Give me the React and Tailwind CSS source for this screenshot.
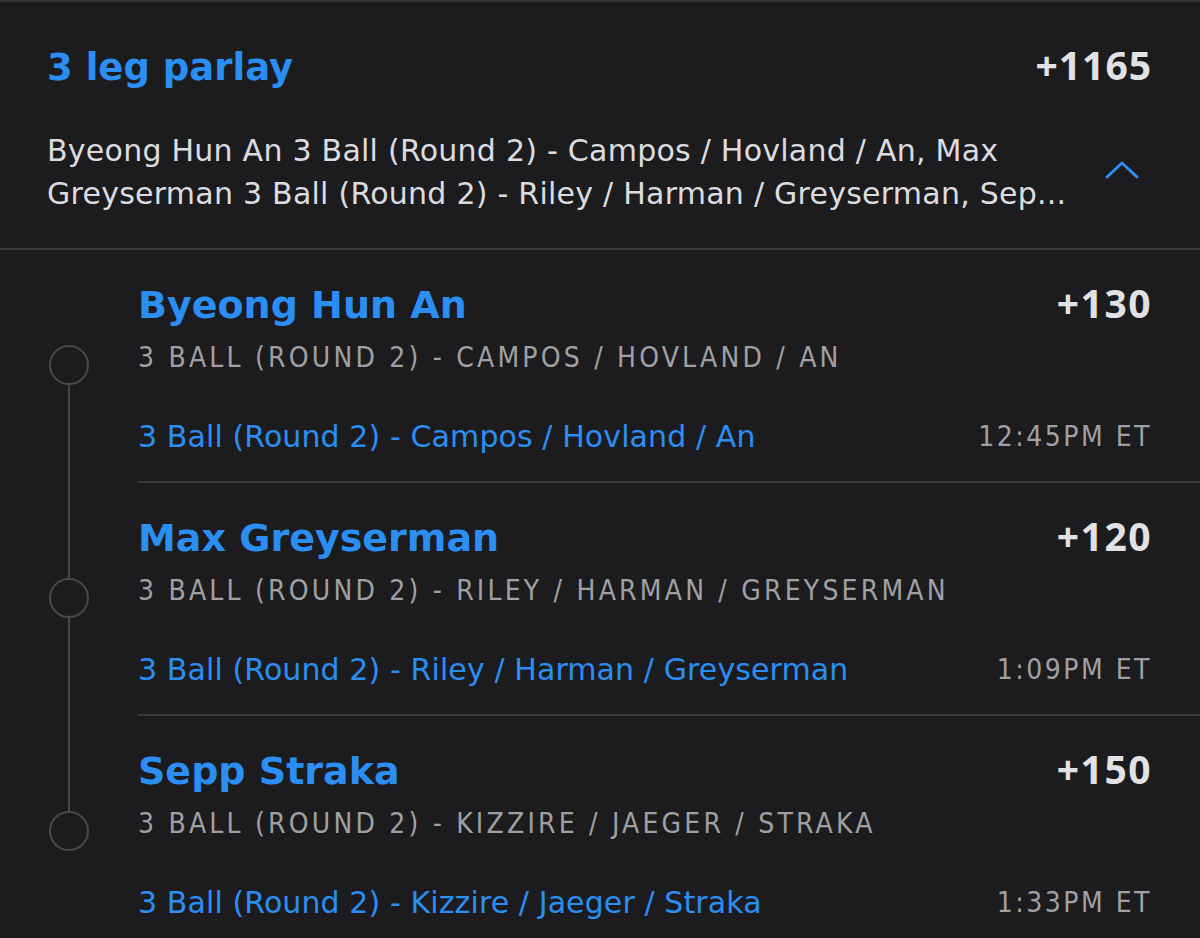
import React from 'react';

const legs = [
  {
    name: 'Byeong Hun An',
    odds: '+130',
    market: '3 Ball (Round 2) - Campos / Hovland / An',
    time: '12:45PM ET',
  },
  {
    name: 'Max Greyserman',
    odds: '+120',
    market: '3 Ball (Round 2) - Riley / Harman / Greyserman',
    time: '1:09PM ET',
  },
  {
    name: 'Sepp Straka',
    odds: '+150',
    market: '3 Ball (Round 2) - Kizzire / Jaeger / Straka',
    time: '1:33PM ET',
  },
];

const sans = "font-['DejaVu_Sans','Noto_Sans',sans-serif]";
const odds = "font-['Open_Sans','Noto_Sans',sans-serif]";
const narrow = "font-['DejaVu_Sans_Condensed','Roboto',sans-serif]";

function Leg({ leg, first, last }) {
  return (
    <div className="flex h-[233px]">
      {/* timeline */}
      <div className="w-[138px] flex flex-col items-center">
        <div className={`w-[2px] h-[95px] ${first ? '' : 'bg-[#48484a]'}`} />
        <div className="w-[40px] h-[40px] rounded-full border-2 border-[#48484a] shrink-0" />
        <div className={`w-[2px] flex-1 ${last ? '' : 'bg-[#48484a]'}`} />
      </div>

      <div className={`flex-1 flex flex-col ${last ? '' : 'border-b-2 border-[#3a3a3c]'}`}>
        <div className="pr-[48px] pt-[29px] flex items-baseline justify-between">
          <span className={`${sans} text-[38px] leading-[48px] font-bold text-[#2b8ef3]`}>{leg.name}</span>
          <span className={`${odds} text-[39px] leading-[48px] font-bold tracking-[1.5px] text-[#e2e2e6]`}>{leg.odds}</span>
        </div>
        <div className={`${narrow} text-[28px] leading-[34px] tracking-[3.2px] uppercase text-[#a0a0a4] mt-[12px]`}>
          {leg.market}
        </div>
        <div className="pr-[48px] mt-[44px] flex items-center justify-between">
          <span className={`${sans} text-[30px] leading-[36px] tracking-[0.1px] text-[#2b8ef3]`}>{leg.market}</span>
          <span className={`${narrow} text-[28px] leading-[36px] tracking-[2.5px] text-[#a0a0a4]`}>{leg.time}</span>
        </div>
      </div>
    </div>
  );
}

export default function App() {
  return (
    <div className="w-[1200px] h-[938px] bg-[#1c1c1e] border-t-2 border-[#333335] overflow-hidden">
      <div className="pl-[47px] pr-[48px] pt-[35px] h-[248px] border-b-2 border-[#3a3a3c]">
        <div className="flex items-baseline justify-between">
          <span className={`${sans} text-[37px] leading-[56px] font-bold text-[#2b8ef3]`}>3 leg parlay</span>
          <span className={`${odds} text-[39px] leading-[56px] font-bold tracking-[1px] text-[#e2e2e6]`}>+1165</span>
        </div>
        <div className="mt-[33px] flex items-start justify-between">
          <p className={`${sans} text-[30px] leading-[43px] tracking-[0.25px] text-[#dcdce0]`}>
            <span className="block whitespace-nowrap">Byeong Hun An 3 Ball (Round 2) - Campos / Hovland / An, Max</span>
            <span className="block whitespace-nowrap">Greyserman 3 Ball (Round 2) - Riley / Harman / Greyserman, Sep...</span>
          </p>
          <svg className="w-[36px] h-[20px] mr-[12px] mt-[31px] shrink-0" viewBox="0 0 36 20" fill="none">
            <path d="M3 17 L18 3 L33 17" stroke="#2b8ef3" strokeWidth="3" strokeLinecap="round" strokeLinejoin="round" />
          </svg>
        </div>
      </div>

      {legs.map((leg, i) => (
        <Leg key={leg.name} leg={leg} first={i === 0} last={i === legs.length - 1} />
      ))}
    </div>
  );
}
